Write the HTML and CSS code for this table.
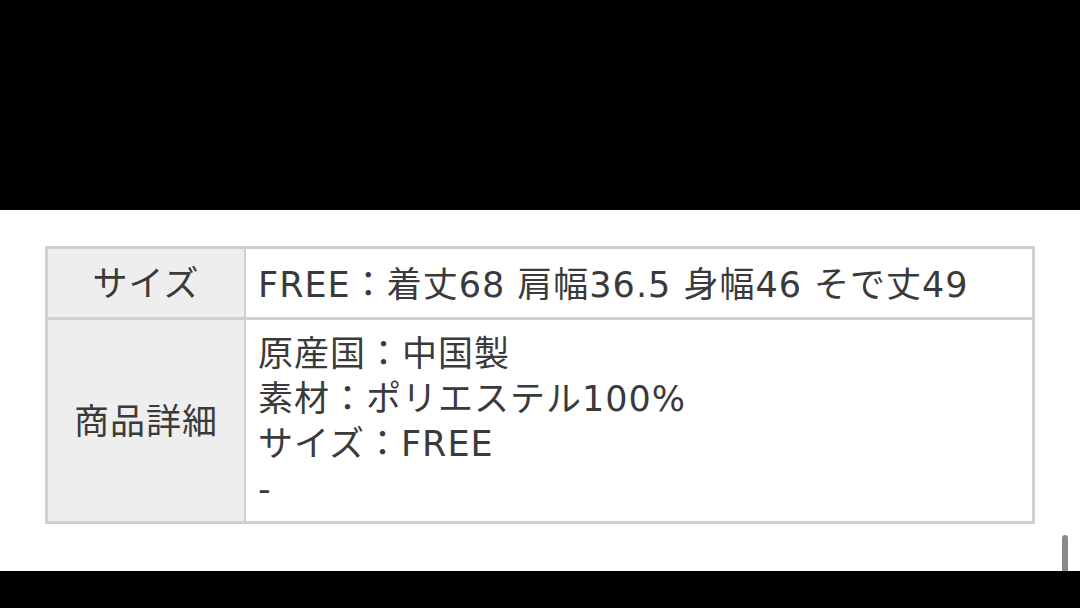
FILE: index.html
```html
<!DOCTYPE html>
<html lang="ja">
<head>
  <meta charset="UTF-8" />
  <title>商品詳細</title>
  <link rel="stylesheet" href="styles.css">
</head>
<body>
  <div class="bar-top"></div>
  <main class="content">
    <table class="spec">
      <tr>
        <th>サイズ</th>
        <td class="one">FREE：着丈68 肩幅36.5 身幅46 そで丈49</td>
      </tr>
      <tr>
        <th>商品詳細</th>
        <td>原産国：中国製<br>素材：ポリエステル100%<br>サイズ：FREE<br>-</td>
      </tr>
    </table>
    <div class="scroll-thumb"></div>
  </main>
  <div class="bar-bottom"></div>
</body>
</html>
```

FILE: styles.css
```css
body {
  margin: 0;
  padding: 0;
  background: #000;
  font-family: "DejaVu Sans", "Noto Sans CJK JP", sans-serif;
  color: #3a3a3a;
}
.bar-top {
  height: 210px;
  background: #000;
}
.bar-bottom {
  height: 37px;
  background: #000;
}
.content {
  position: relative;
  height: 361px;
  background: #fff;
  padding: 36px 0 0 45px;
  box-sizing: border-box;
}
.spec {
  width: 990px;
  border-collapse: collapse;
  border: 3px solid #cfcfcf;
  font-size: 35px;
  line-height: 45px;
}
.spec th,
.spec td {
  border: 2px solid #cfcfcf;
  border-top-width: 3px;
  border-bottom-width: 3px;
}
.spec th {
  width: 196px;
  background: #eeeeee;
  font-weight: normal;
  text-align: center;
  vertical-align: middle;
  padding: 3px 0 0;
  letter-spacing: 1px;
}
.spec td {
  padding: 12px 12px 9px;
  text-align: left;
  vertical-align: top;
  letter-spacing: 1px;
}
.spec td.one {
  padding: 14px 12px 9px;
}
.scroll-thumb {
  position: absolute;
  right: 12px;
  bottom: 0;
  width: 6px;
  height: 36px;
  border-radius: 3px 3px 0 0;
  background: #8a8a8a;
}
```
